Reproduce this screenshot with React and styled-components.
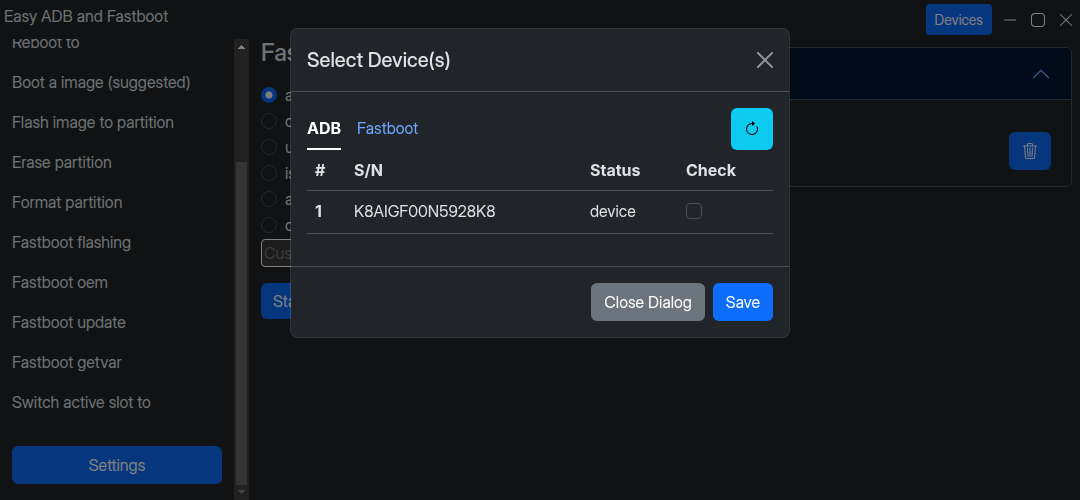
import React, { useState } from "react";
import styled, { createGlobalStyle, css } from "styled-components";
import { BsApp, BsArrowClockwise, BsDashLg, BsTrash3, BsXLg } from "react-icons/bs";

const c = {
  bg: "#212529",
  text: "#dee2e6",
  border: "#495057",
  primary: "#0d6efd",
  secondary: "#6c757d",
  info: "#0dcaf0",
  link: "#6ea8fe",
  subtle: "#031633",
};

const boldFont = `Inter, "Liberation Sans", sans-serif`;

const GlobalStyle = createGlobalStyle`
  *, *::before, *::after { box-sizing: border-box; }
  body {
    margin: 0;
    background: ${c.bg};
    color: ${c.text};
    font: 400 16px/24px "Inter Display", Inter, "Liberation Sans", sans-serif;
  }
`;

const Shell = styled.div`
  display: flex;
  flex-direction: column;
  height: 100vh;
`;

const TitleBar = styled.header`
  display: flex;
  align-items: flex-start;
  padding: 4px 6px 3px 4px;
`;

const AppName = styled.span`
  flex: 1;
`;

const WindowTools = styled.div`
  display: flex;
  align-items: center;
  gap: 12px;
  margin-left: 10px;
  height: 32px;
`;

const WindowButton = styled.button`
  display: flex;
  padding: 0;
  border: 0;
  background: none;
  color: #fff;
  font-size: 16px;
`;

const Button = styled.button`
  border: 1px solid transparent;
  border-radius: 6px;
  padding: 6px 12px;
  font: inherit;
  color: ${(p) => p.$ink || "#fff"};
  background: ${(p) => c[p.$tone || "primary"]};
  ${(p) =>
    p.$small &&
    css`
      padding: 4px 8px;
      border-radius: 4px;
      font-size: 14px;
      line-height: 21px;
    `}
  ${(p) =>
    p.$icon &&
    css`
      display: flex;
      align-items: center;
    `}
`;

const Workspace = styled.div`
  flex: 1;
  min-height: 0;
  display: flex;
`;

const Sidebar = styled.nav`
  flex: 0 0 234px;
  display: flex;
  flex-direction: column;
  justify-content: flex-end;
  overflow: hidden;
  padding: 0 12px 16px;
`;

const SideLink = styled.a`
  flex: none;
  padding: 8px 0;
  color: ${c.text};
  text-decoration: none;
`;

const SettingsButton = styled(Button)`
  flex: none;
  margin-top: 24px;
`;

const ScrollTrack = styled.div`
  flex: 0 0 15px;
  display: flex;
  flex-direction: column;
  align-items: center;
  background: #424242;
`;

const ScrollArrow = styled.svg`
  flex: none;
  width: 15px;
  height: 15px;
`;

const ScrollLane = styled.div`
  flex: 1;
  width: 11px;
  display: flex;
  flex-direction: column;
  justify-content: flex-end;
`;

const ScrollThumb = styled.div`
  height: 75%;
  background: #686868;
`;

const Main = styled.main`
  flex: 1;
  min-width: 0;
  display: grid;
  grid-template-columns: 1fr 1fr;
  align-items: start;
  gap: 24px;
  padding: 0 8px 0 12px;
`;

const Heading = styled.h4`
  margin: 0 0 16px;
  font-size: 24px;
  line-height: 28px;
  font-weight: 500;
`;

const RadioRow = styled.label`
  display: flex;
  align-items: center;
  gap: 8px;
  height: 24px;
  margin-bottom: 2px;
`;

const CheckInput = styled.input`
  appearance: none;
  flex: none;
  display: block;
  width: 16px;
  height: 16px;
  margin: ${(p) => (p.type === "checkbox" ? "4px 0 6px" : "0")};
  border: 1px solid ${c.border};
  border-radius: ${(p) => (p.type === "radio" ? "50%" : "4px")};
  background: ${c.bg};
  &:checked {
    border-color: ${c.primary};
    background: ${(p) =>
      p.type === "radio"
        ? `radial-gradient(circle, #fff 0 3px, ${c.primary} 4px)`
        : c.primary};
  }
`;

const CustomInput = styled.input`
  display: block;
  width: 100%;
  height: 28px;
  margin-bottom: 16px;
  padding: 1px 2px;
  border: 1px solid #fff;
  border-radius: 4px;
  background: #3b3b3b;
  color: ${c.text};
  font: inherit;
  &::placeholder { color: #757575; }
`;

const StartButton = styled(Button)`
  padding: 5px 11px;
`;

const Accordion = styled.section`
  margin-top: 8px;
  border: 1px solid ${c.border};
  border-radius: 6px;
  overflow: hidden;
`;

const AccordionHeader = styled.button`
  display: flex;
  align-items: center;
  justify-content: space-between;
  width: 100%;
  height: 52px;
  padding: 0 20px;
  border: 0;
  border-bottom: 1px solid ${c.border};
  background: ${c.subtle};
  color: ${c.link};
  font: inherit;
`;

const AccordionBody = styled.div`
  display: flex;
  justify-content: flex-end;
  padding: 32px 20px 16px;
`;

const TrashButton = styled(Button)`
  height: 38px;
`;

const Backdrop = styled.div`
  position: fixed;
  inset: 0;
  padding: 28px 8px;
  background: rgba(0, 0, 0, 0.5);
`;

const Dialog = styled.div`
  max-width: 500px;
  margin: 0 auto;
  border: 1px solid rgba(255, 255, 255, 0.15);
  border-radius: 8px;
  background: ${c.bg};
  background-clip: padding-box;
`;

const DialogHeader = styled.div`
  display: flex;
  align-items: center;
  justify-content: space-between;
  padding: 16px;
  border-bottom: 1px solid ${c.border};
`;

const DialogTitle = styled.h5`
  margin: 0;
  font-size: 20px;
  line-height: 30px;
  font-weight: 500;
`;

const CloseButton = styled.button`
  display: flex;
  padding: 0;
  border: 0;
  background: none;
  color: #fff;
  opacity: 0.5;
`;

const DialogBody = styled.div`
  padding: 16px;
`;

const TabBar = styled.div`
  display: flex;
  justify-content: space-between;
`;

const Tabs = styled.div`
  display: flex;
  gap: 16px;
`;

const Tab = styled.button`
  padding: 8px 0;
  border: 0;
  border-bottom: 2px solid transparent;
  background: none;
  font: inherit;
  color: ${c.link};
  ${(p) =>
    p.$active &&
    css`
      border-bottom-color: #fff;
      font-family: ${boldFont};
      font-weight: 700;
      color: #fff;
    `}
`;

const DeviceTable = styled.table`
  width: 100%;
  margin-bottom: 16px;
  border-collapse: separate;
  border-spacing: 0;
  table-layout: fixed;
  th, td {
    padding: 8px;
    text-align: left;
    vertical-align: top;
    border-bottom: 1px solid ${c.border};
  }
  th {
    font-family: ${boldFont};
    font-weight: 700;
  }
`;

const Column = styled.col`
  width: ${(p) => p.$width};
`;

const DialogFooter = styled.div`
  display: flex;
  justify-content: flex-end;
  gap: 8px;
  padding: 16px;
  border-top: 1px solid ${c.border};
`;

const links = [
  "Reboot to",
  "Boot a image (suggested)",
  "Flash image to partition",
  "Erase partition",
  "Format partition",
  "Fastboot flashing",
  "Fastboot oem",
  "Fastboot update",
  "Fastboot getvar",
  "Switch active slot to",
];

const variables = ["all", "current-slot", "unlocked", "is-userspace", "anti", "custom"];

const devices = [{ serial: "K8AIGF00N5928K8", status: "device" }];

function DeviceDialog() {
  const [tab, setTab] = useState("ADB");
  return (
    <Backdrop>
      <Dialog role="dialog" aria-modal="true" aria-labelledby="device-title">
        <DialogHeader>
          <DialogTitle id="device-title">Select Device(s)</DialogTitle>
          <CloseButton aria-label="Close">
            <svg width="16" height="16" viewBox="0 0 16 16" fill="currentColor">
              <path d="M.293.293a1 1 0 0 1 1.414 0L8 6.586 14.293.293a1 1 0 1 1 1.414 1.414L9.414 8l6.293 6.293a1 1 0 0 1-1.414 1.414L8 9.414l-6.293 6.293a1 1 0 0 1-1.414-1.414L6.586 8 .293 1.707a1 1 0 0 1 0-1.414z" />
            </svg>
          </CloseButton>
        </DialogHeader>
        <DialogBody>
          <TabBar>
            <Tabs role="tablist">
              {["ADB", "Fastboot"].map((name) => (
                <Tab
                  key={name}
                  role="tab"
                  aria-selected={tab === name}
                  $active={tab === name}
                  onClick={() => setTab(name)}
                >
                  {name}
                </Tab>
              ))}
            </Tabs>
            <Button $icon $tone="info" $ink="#000" aria-label="Refresh">
              <BsArrowClockwise />
            </Button>
          </TabBar>
          <DeviceTable>
            <colgroup>
              <Column $width="39px" />
              <Column />
              <Column $width="96px" />
              <Column $width="95px" />
            </colgroup>
            <thead>
              <tr>
                <th scope="col">#</th>
                <th scope="col">S/N</th>
                <th scope="col">Status</th>
                <th scope="col">Check</th>
              </tr>
            </thead>
            <tbody>
              {devices.map((d, i) => (
                <tr key={d.serial}>
                  <th scope="row">{i + 1}</th>
                  <td>{d.serial}</td>
                  <td>{d.status}</td>
                  <td>
                    <CheckInput type="checkbox" aria-label={`Select ${d.serial}`} />
                  </td>
                </tr>
              ))}
            </tbody>
          </DeviceTable>
        </DialogBody>
        <DialogFooter>
          <Button $tone="secondary">Close Dialog</Button>
          <Button>Save</Button>
        </DialogFooter>
      </Dialog>
    </Backdrop>
  );
}

export default function App() {
  return (
    <>
      <GlobalStyle />
      <Shell>
        <TitleBar>
          <AppName>Easy ADB and Fastboot</AppName>
          <Button $small>Devices</Button>
          <WindowTools>
            <WindowButton aria-label="Minimize"><BsDashLg /></WindowButton>
            <WindowButton aria-label="Maximize"><BsApp /></WindowButton>
            <WindowButton aria-label="Close window"><BsXLg /></WindowButton>
          </WindowTools>
        </TitleBar>
        <Workspace>
          <Sidebar>
            {links.map((name) => (
              <SideLink key={name} href="#">{name}</SideLink>
            ))}
            <SettingsButton>Settings</SettingsButton>
          </Sidebar>
          <ScrollTrack aria-hidden="true">
            <ScrollArrow viewBox="0 0 15 15" shapeRendering="crispEdges">
              <path d="M3.5 10 7.5 6l4 4z" fill="#fff" />
            </ScrollArrow>
            <ScrollLane>
              <ScrollThumb />
            </ScrollLane>
            <ScrollArrow viewBox="0 0 15 15" shapeRendering="crispEdges">
              <path d="M3.5 5 7.5 9l4-4z" fill="#868686" />
            </ScrollArrow>
          </ScrollTrack>
          <Main>
            <section>
              <Heading>Fastboot getvar</Heading>
              {variables.map((name, i) => (
                <RadioRow key={name}>
                  <CheckInput type="radio" name="variable" defaultChecked={i === 0} />
                  {name}
                </RadioRow>
              ))}
              <CustomInput placeholder="Custom" aria-label="Custom variable" />
              <StartButton>Start</StartButton>
            </section>
            <Accordion>
              <AccordionHeader aria-expanded="true">
                <span>Log</span>
                <svg width="20" height="20" viewBox="0 0 16 16" fill="currentColor">
                  <path
                    fillRule="evenodd"
                    d="M14.354 11.354a.5.5 0 0 1-.708 0L8 5.707l-5.646 5.647a.5.5 0 0 1-.708-.708l6-6a.5.5 0 0 1 .708 0l6 6a.5.5 0 0 1 0 .708z"
                  />
                </svg>
              </AccordionHeader>
              <AccordionBody>
                <TrashButton $icon aria-label="Clear log"><BsTrash3 /></TrashButton>
              </AccordionBody>
            </Accordion>
          </Main>
        </Workspace>
      </Shell>
      <DeviceDialog />
    </>
  );
}
